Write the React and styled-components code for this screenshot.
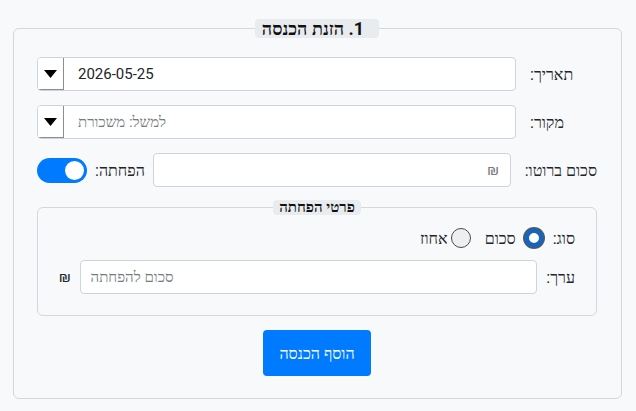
import React, { useState } from "react";
import styled, { createGlobalStyle } from "styled-components";

const Global = createGlobalStyle`
  html, body { margin: 0; padding: 0; background: #f8f9fa; }
  body { font-family: Roboto, "Liberation Serif", serif; color: #212529; font-size: 16px; }
  * { box-sizing: border-box; }
`;

const Page = styled.div`
  direction: rtl;
  padding: 19px 14px 0 13px;
`;

const Panel = styled.fieldset`
  margin: 0;
  border: 1px solid #d4d7db;
  border-radius: 6px;
  padding: 12px 24px 22px 23px;
  display: flex;
  flex-direction: column;
  gap: 14px;
`;

const Legend = styled.legend`
  margin: 0 auto 7px;
  padding: 0 15px 0 7px;
  background: #e9ecef;
  border-radius: 4px;
  font-weight: bold;
  font-size: 18px;
  line-height: 19px;
  color: #111;
`;

const Row = styled.div`
  display: flex;
  align-items: center;
  gap: ${(p) => p.$gap || 8}px;
`;

const Label = styled.label`
  flex: 0 0 ${(p) => p.$w || 67}px;
  text-align: ${(p) => p.$align || "left"};
  white-space: nowrap;
`;

const Field = styled.div`
  flex: 1;
  display: flex;
  align-items: stretch;
  height: 34px;
  background: #fff;
  border: 1px solid #ced4da;
  border-radius: 4px;
  overflow: hidden;
`;

const Input = styled.input`
  flex: 1;
  min-width: 0;
  border: none;
  outline: none;
  background: transparent;
  font-family: inherit;
  font-size: 15px;
  color: #212529;
  direction: rtl;
  text-align: ${(p) => p.$align || "left"};
  padding: 0 11px 0 ${(p) => p.$pl || 10}px;
  &::placeholder { color: #757b82; }
`;

const DropBtn = styled.div`
  order: 2;
  flex: 0 0 26px;
  display: flex;
  align-items: center;
  justify-content: center;
  background: #fff;
  border-right: 1px solid #8d8d8d;
  border-bottom: 1px solid #8d8d8d;
  svg { display: block; }
`;

const Toggle = styled.button`
  position: relative;
  flex: 0 0 50px;
  height: 25px;
  border: none;
  padding: 0;
  border-radius: 13px;
  background: ${(p) => (p.$on ? "#007bff" : "#ccc")};
  cursor: pointer;
  &::after {
    content: "";
    position: absolute;
    top: 3px;
    ${(p) => (p.$on ? "left: 28px;" : "left: 3px;")}
    width: 19px;
    height: 19px;
    border-radius: 50%;
    background: #fff;
  }
`;

const SubPanel = styled.fieldset`
  margin: -1px 0 0;
  border: 1px solid #d4d7db;
  border-radius: 6px;
  padding: 12px 21px 21px 21px;
  display: flex;
  flex-direction: column;
  gap: 11px;
`;

const SubLegend = styled.legend`
  margin: 0 auto;
  padding: 0 6px;
  background: #e9ecef;
  border-radius: 4px;
  font-weight: bold;
  font-size: 15px;
  line-height: 15px;
  color: #111;
`;

const RadioRow = styled.div`
  display: flex;
  align-items: center;
  height: 22px;
  gap: 9px;
`;

const Option = styled.label`
  display: flex;
  align-items: center;
  gap: ${(p) => p.$gap || 6}px;
  margin-right: ${(p) => p.$mr || 0}px;
  cursor: pointer;
`;

const Radio = styled.input.attrs({ type: "radio" })`
  appearance: none;
  margin: 0;
  width: 20px;
  height: 20px;
  border-radius: 50%;
  border: 1px solid #4a4a4a;
  background: #efefef;
  &:checked {
    border: 5px solid #1764b8;
    background: #fff;
    box-shadow: 0 0 0 1px #5a5a5a;
  }
`;

const Shekel = styled.span`
  flex: 0 0 auto;
  font-size: 15px;
`;

const Actions = styled.div`
  display: flex;
  justify-content: center;
`;

const Button = styled.button`
  background: #007bff;
  color: #fff;
  border: none;
  border-radius: 4px;
  font-family: inherit;
  font-size: 16px;
  height: 46px;
  padding: 0 16px;
  cursor: pointer;
`;

const Caret = () => (
  <svg width="13" height="8" viewBox="0 0 13 8">
    <path d="M0 0 H13 L6.5 8 Z" fill="#000" />
  </svg>
);

export default function App() {
  const [on, setOn] = useState(true);
  const [type, setType] = useState("sum");
  return (
    <>
      <Global />
      <Page>
        <Panel>
          <Legend>1. הזנת הכנסה</Legend>
          <Row $gap={14}>
            <Label>תאריך:</Label>
            <Field>
              <Input $pl={14} defaultValue="2026-05-25" />
              <DropBtn><Caret /></DropBtn>
            </Field>
          </Row>
          <Row $gap={14}>
            <Label>מקור:</Label>
            <Field>
              <Input $pl={14} placeholder="למשל: משכורת" />
              <DropBtn><Caret /></DropBtn>
            </Field>
          </Row>
          <Row $gap={8}>
            <Label style={{ marginLeft: 6 }}>סכום ברוטו:</Label>
            <Field>
              <Input $align="right" placeholder="₪" />
            </Field>
            <Label as="span" $w={48} $align="right">הפחתה:</Label>
            <Toggle $on={on} onClick={() => setOn(!on)} aria-label="הפחתה" />
          </Row>
          <SubPanel>
            <SubLegend>פרטי הפחתה</SubLegend>
            <RadioRow>
              <span>סוג:</span>
              <Option $gap={8}>
                <Radio name="t" checked={type === "sum"} onChange={() => setType("sum")} />
                <span>סכום</span>
              </Option>
              <Option $gap={3} $mr={5}>
                <Radio name="t" checked={type === "pct"} onChange={() => setType("pct")} />
                <span>אחוז</span>
              </Option>
            </RadioRow>
            <Row $gap={9}>
              <Label $w={26} $align="right">ערך:</Label>
              <Field>
                <Input placeholder="סכום להפחתה" />
              </Field>
              <Shekel>₪</Shekel>
            </Row>
          </SubPanel>
          <Actions>
            <Button>הוסף הכנסה</Button>
          </Actions>
        </Panel>
      </Page>
    </>
  );
}
